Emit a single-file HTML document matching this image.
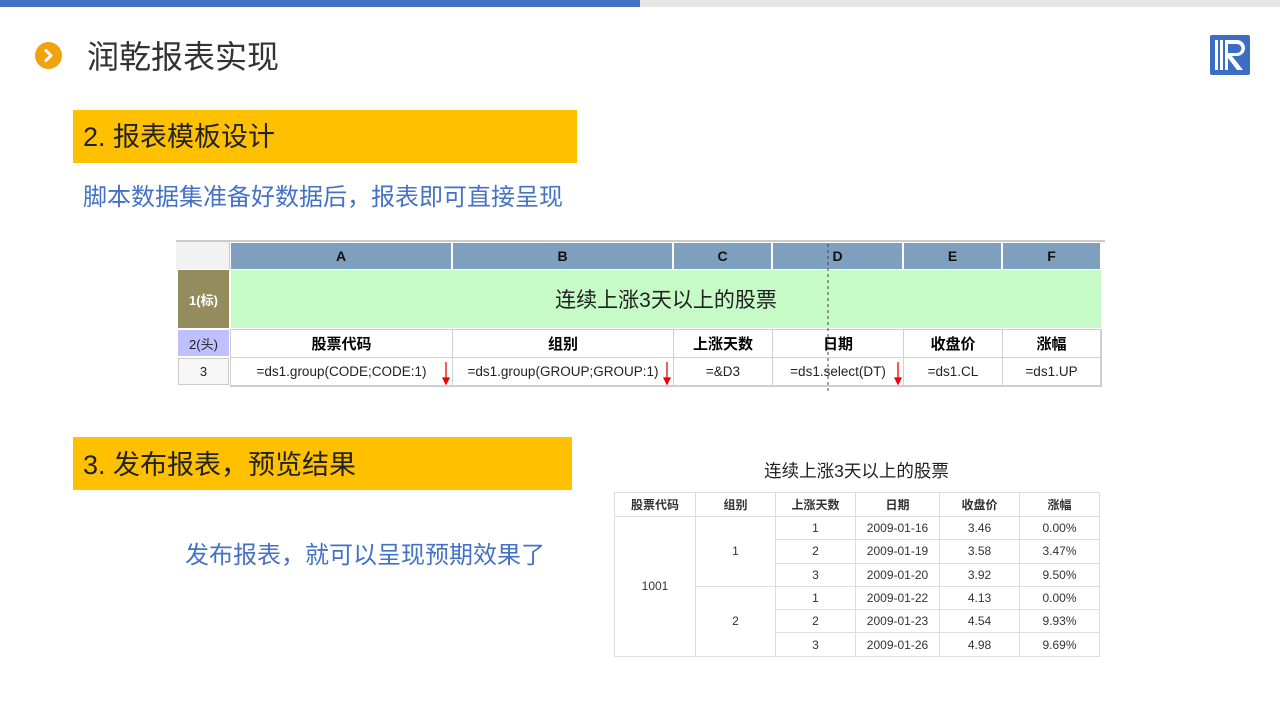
<!DOCTYPE html>
<html><head><meta charset="utf-8"><style>
*{margin:0;padding:0;box-sizing:border-box}
body{width:1280px;height:720px;position:relative;background:#fff;font-family:"Liberation Sans","Noto Sans CJK SC",sans-serif;overflow:hidden}
.a{position:absolute}
.c{position:absolute;display:flex;align-items:center;justify-content:center;white-space:nowrap}
.ss{border-right:1px solid #d0d0d0;border-bottom:1px solid #d0d0d0}
.h{background:#7f9fbf;font-weight:bold;font-size:14px;color:#111;border-right:1px solid #fff}
.rt td{border:1px solid #ddd;text-align:center;font-size:12px;color:#333;height:23.3px;padding:0}
</style></head><body>
<div class="a" style="left:0;top:0;width:640px;height:7px;background:#4472c4"></div>
<div class="a" style="left:640px;top:0;width:640px;height:7px;background:#e7e6e6"></div>
<div class="a" style="left:35px;top:42px;width:27px;height:27px;border-radius:50%;background:#f0a30a"></div>
<svg class="a" style="left:35px;top:42px" width="27" height="27"><path d="M11 8.5 L16 13.5 L11 18.5" stroke="#fff" stroke-width="3" fill="none" stroke-linecap="round" stroke-linejoin="round"/></svg>
<div class="a" style="left:87px;top:37px;font-size:32px;color:#333;line-height:40px">润乾报表实现</div>
<svg class="a" style="left:1210px;top:35px" width="40" height="40" viewBox="0 0 40 40"><rect x="0" y="0" width="40" height="40" rx="2" fill="#3b6dc4"/><rect x="5" y="5" width="3" height="30" fill="#fff"/><rect x="10" y="5" width="3" height="30" fill="#fff"/><path d="M15 5 H27 A8 8 0 0 1 27 21 H22 L33 35 H27 L18 23 V35 H15 Z M18 9 V18 H27 A4.5 4.5 0 0 0 27 9 Z" fill="#fff"/></svg>

<div class="a" style="left:73px;top:110px;width:504px;height:53px;background:#ffc000"></div>
<div class="a" style="left:83px;top:119px;font-size:27px;color:#222;line-height:36px">2. 报表模板设计</div>
<div class="a" style="left:83px;top:182px;font-size:24px;color:#4472c4;line-height:32px">脚本数据集准备好数据后，报表即可直接呈现</div>

<div class="a" style="left:176px;top:240px;width:929px;height:150px;background:#fff;border-top:2px solid #ccc"></div>
<div class="c" style="left:176px;top:242px;width:54px;height:27px;background:#f2f2f2;border-right:1px solid #ccc"></div>
<div class="c h" style="left:231px;top:243px;width:221px;height:26px">A</div>
<div class="c h" style="left:453px;top:243px;width:220px;height:26px">B</div>
<div class="c h" style="left:674px;top:243px;width:98px;height:26px">C</div>
<div class="c h" style="left:773px;top:243px;width:130px;height:26px">D</div>
<div class="c h" style="left:904px;top:243px;width:98px;height:26px">E</div>
<div class="c h" style="left:1003px;top:243px;width:98px;height:26px">F</div>
<div class="c" style="left:178px;top:270px;width:51px;height:58px;background:#958c5e;color:#fff;font-weight:bold;font-size:13px">1(标)</div>
<div class="c" style="left:231px;top:270px;width:870px;height:58px;background:#c6fac6;font-size:21px;color:#222">连续上涨3天以上的股票</div>
<div class="c" style="left:178px;top:330px;width:51px;height:26px;background:#c0c0ff;font-size:13px;color:#222">2(头)</div>
<div class="c" style="left:178px;top:358px;width:51px;height:27px;background:#f7f7f7;font-size:13px;color:#222;border:1px solid #ccc">3</div>
<div class="a" style="left:230px;top:329px;width:872px;height:58px;border:1px solid #ccc"></div>
<div class="c ss" style="left:231px;top:330px;width:222px;height:28px;font-weight:bold;font-size:15px">股票代码</div>
<div class="c ss" style="left:453px;top:330px;width:221px;height:28px;font-weight:bold;font-size:15px">组别</div>
<div class="c ss" style="left:674px;top:330px;width:99px;height:28px;font-weight:bold;font-size:15px">上涨天数</div>
<div class="c ss" style="left:773px;top:330px;width:131px;height:28px;font-weight:bold;font-size:15px">日期</div>
<div class="c ss" style="left:904px;top:330px;width:99px;height:28px;font-weight:bold;font-size:15px">收盘价</div>
<div class="c ss" style="left:1003px;top:330px;width:98px;height:28px;font-weight:bold;font-size:15px">涨幅</div>
<div class="c ss" style="left:231px;top:358px;width:222px;height:28px;font-size:13.5px;color:#222">=ds1.group(CODE;CODE:1)</div>
<div class="c ss" style="left:453px;top:358px;width:221px;height:28px;font-size:13.5px;color:#222">=ds1.group(GROUP;GROUP:1)</div>
<div class="c ss" style="left:674px;top:358px;width:99px;height:28px;font-size:13.5px;color:#222">=&amp;D3</div>
<div class="c ss" style="left:773px;top:358px;width:131px;height:28px;font-size:13.5px;color:#222">=ds1.select(DT)</div>
<div class="c ss" style="left:904px;top:358px;width:99px;height:28px;font-size:13.5px;color:#222">=ds1.CL</div>
<div class="c ss" style="left:1003px;top:358px;width:98px;height:28px;font-size:13.5px;color:#222">=ds1.UP</div>
<svg class="a" style="left:0;top:0" width="1280" height="400"><g stroke="#e00" fill="#e00" stroke-width="1.3"><path d="M446 362V382"/><path d="M443 378L446 384L449 378Z"/><path d="M667 362V382"/><path d="M664 378L667 384L670 378Z"/><path d="M898 362V382"/><path d="M895 378L898 384L901 378Z"/></g><path d="M828 244V392" stroke="#444" stroke-dasharray="3,3" stroke-width="1"/></svg>

<div class="a" style="left:73px;top:437px;width:499px;height:53px;background:#ffc000"></div>
<div class="a" style="left:83px;top:447px;font-size:27px;color:#222;line-height:36px">3. 发布报表，预览结果</div>
<div class="a" style="left:185px;top:540px;font-size:24px;color:#4472c4;line-height:32px">发布报表，就可以呈现预期效果了</div>
<div class="a" style="left:614px;top:458px;width:485px;text-align:center;font-size:17.5px;color:#222">连续上涨3天以上的股票</div>
<table class="a rt" style="left:614px;top:492px;width:486px;border-collapse:collapse;table-layout:fixed">
<colgroup><col style="width:81px"><col style="width:80px"><col style="width:80px"><col style="width:84px"><col style="width:80px"><col style="width:80px"></colgroup>
<tr><td style="font-weight:bold;height:24px">股票代码</td><td style="font-weight:bold">组别</td><td style="font-weight:bold">上涨天数</td><td style="font-weight:bold">日期</td><td style="font-weight:bold">收盘价</td><td style="font-weight:bold">涨幅</td></tr>
<tr><td rowspan="6">1001</td><td rowspan="3">1</td><td>1</td><td>2009-01-16</td><td>3.46</td><td>0.00%</td></tr>
<tr><td>2</td><td>2009-01-19</td><td>3.58</td><td>3.47%</td></tr>
<tr><td>3</td><td>2009-01-20</td><td>3.92</td><td>9.50%</td></tr>
<tr><td rowspan="3">2</td><td>1</td><td>2009-01-22</td><td>4.13</td><td>0.00%</td></tr>
<tr><td>2</td><td>2009-01-23</td><td>4.54</td><td>9.93%</td></tr>
<tr><td>3</td><td>2009-01-26</td><td>4.98</td><td>9.69%</td></tr>
</table>
</body></html>
